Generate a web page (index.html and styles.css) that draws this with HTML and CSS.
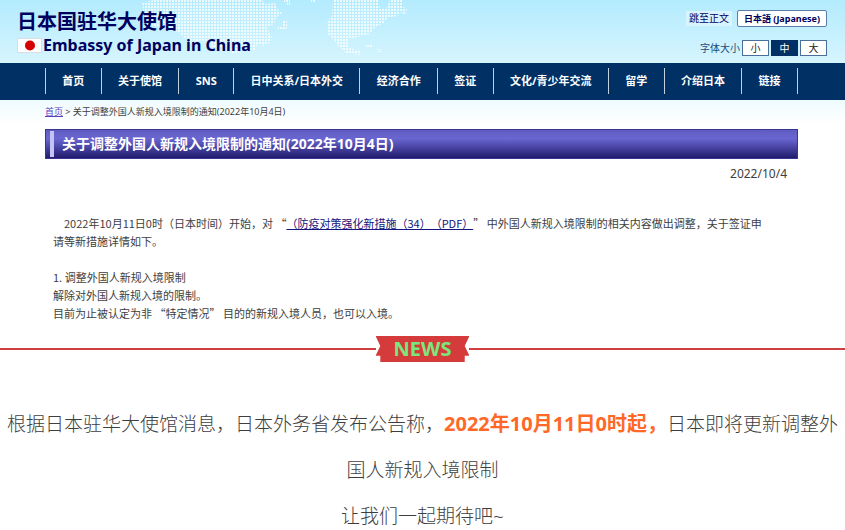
FILE: index.html
```
<!DOCTYPE html>
<html lang="zh-CN">
<head>
  <meta charset="UTF-8" />
  <meta name="viewport" content="width=device-width, initial-scale=1.0"/>
  <title>日本国驻华大使馆</title>
  <link rel="stylesheet" href="styles.css">
</head>
<body>
  <div class="embassy">
    <header class="site-header">
      <svg class="map" width="300" height="63" viewBox="0 0 300 63" aria-hidden="true">
        <defs>
          <pattern id="dots" width="3" height="3" patternUnits="userSpaceOnUse">
            <rect width="2" height="2" fill="#fff"/>
          </pattern>
        </defs>
        <g fill="url(#dots)">
          <path d="M12 3 L24 0 H132 L136 4 L145 3 L148 10 L152 13 L146 18 L144 24 L138 27 L139 33 L142 36 L141 42 L134 46 L128 44 L124 52 L114 48 L104 55 L96 46 L84 48 L72 40 L60 44 L50 34 L36 26 L24 27 L15 18 Z"/>
          <path d="M153 20 h4 v10 h-9 v-4 h5 z M154 0 h6 v6 h-3 v-3 h-3 z M181 0 h4 v3 h-4 z"/>
          <path d="M203 0 H248 L250 8 L256 9 L260 0 H272 V6 L277 9 L276 15 L270 12 L267 16 L258 18 L252 24 L244 28 L240 34 L228 37 L219 39 L219 47 L225 50 L231 50 L230 55 L216 53 L207 45 L204 40 L198 34 V28 L196 23 L202 16 Z"/>
          <path d="M235 45 h7 v3 h-7 z M247 49 h4 v3 h-4 z"/>
        </g>
      </svg>
      <div class="brand">
        <div class="brand-cn">日本国驻华大使馆</div>
        <div class="brand-en">
          <svg class="flag" width="25" height="15" viewBox="0 0 25 15" aria-hidden="true">
            <rect x="0.5" y="0.5" width="24" height="14" fill="#fff" stroke="#dcdce4"/>
            <circle cx="13" cy="7.5" r="5" fill="#d60000"/>
          </svg>
          <span>Embassy of Japan in China</span>
        </div>
      </div>
      <div class="tools">
        <div class="tools-row">
          <a class="skip" href="#main">跳至正文</a>
          <a class="lang" href="#">日本語 (Japanese)</a>
        </div>
        <div class="tools-row sizes">
          <span>字体大小</span>
          <button class="size">小</button>
          <button class="size active">中</button>
          <button class="size">大</button>
        </div>
      </div>
    </header>

    <nav class="menu">
      <a href="#">首页</a>
      <a href="#">关于使馆</a>
      <a href="#">SNS</a>
      <a href="#">日中关系/日本外交</a>
      <a href="#">经济合作</a>
      <a href="#">签证</a>
      <a href="#">文化/青少年交流</a>
      <a href="#">留学</a>
      <a href="#">介绍日本</a>
      <a href="#">链接</a>
    </nav>

    <main class="notice" id="main">
      <div class="crumbs"><a href="#">首页</a> &gt; 关于调整外国人新规入境限制的通知(2022年10月4日)</div>
      <h1>关于调整外国人新规入境限制的通知(2022年10月4日)</h1>
      <div class="date">2022/10/4</div>
      <div class="text">
        <p class="lead">2022年10月11日0时（日本时间）开始，对 “<a href="#">（防疫对策强化新措施（34）（PDF）</a>” 中外国人新规入境限制的相关内容做出调整，关于签证申<br>请等新措施详情如下。</p>
        <p>1. 调整外国人新规入境限制<br>解除对外国人新规入境的限制。<br>目前为止被认定为非 “特定情况” 目的的新规入境人员，也可以入境。</p>
      </div>
    </main>
  </div>

  <div class="divider">
    <h2 class="ribbon">NEWS</h2>
  </div>

  <div class="article">
    <p>根据日本驻华大使馆消息，日本外务省发布公告称，<strong>2022年10月11日0时起，</strong>日本即将更新调整外国人新规入境限制</p>
    <p>让我们一起期待吧~</p>
  </div>
</body>
</html>
```

FILE: styles.css
```
* {
  box-sizing: border-box;
}

body {
  margin: 0;
  background: #fff;
  color: #3e3e3e;
  font-family: "Noto Sans", "Noto Sans CJK SC", sans-serif;
  text-spacing-trim: space-all;
}

.site-header {
  position: relative;
  display: flex;
  justify-content: space-between;
  height: 63px;
  padding: 10px 18px 0 17px;
  background: linear-gradient(#b3ebfe, #d6f5fe);
}

.map {
  position: absolute;
  top: 0;
  left: 130px;
  opacity: 0.75;
}

.brand {
  position: relative;
  color: #00005f;
  font-weight: bold;
}

.brand-cn {
  font-size: 20px;
  line-height: 24px;
}

.brand-en {
  display: flex;
  align-items: center;
  gap: 1px;
  font-size: 16px;
  line-height: 22px;
}

.tools {
  display: flex;
  flex-direction: column;
  align-items: flex-end;
  gap: 12px;
  font-size: 10px;
}

.tools-row {
  display: flex;
  align-items: center;
  gap: 5px;
  height: 17px;
  color: #1c4a78;
}

.sizes {
  gap: 2px;
}

.tools a {
  color: #00005f;
  text-decoration: none;
  line-height: 15px;
}

.skip {
  padding: 0 3px;
  background: #d9f4fe;
}

.lang {
  padding: 0 6px;
  border: 1px solid #5a7fa8;
  border-radius: 2px;
  background: #fff;
  font-size: 9px;
  font-weight: bold;
}

.size {
  width: 27px;
  height: 16px;
  padding: 0;
  border: 1px solid #4a6f98;
  background: #fff;
  color: #222;
  font: inherit;
  line-height: 14px;
}

.size.active {
  border-color: #003064;
  background: #003064;
  color: #fff;
}

.menu {
  display: flex;
  padding: 5px 47px 6px 45px;
  background: #003064;
}

.menu a {
  flex: 1 1 auto;
  border-right: 1px solid #c3d0de;
  color: #fff;
  font-size: 11px;
  font-weight: bold;
  line-height: 26px;
  text-align: center;
  text-decoration: none;
}

.menu a:first-child {
  border-left: 1px solid #c3d0de;
}

.notice {
  padding: 4px 47px 0 45px;
  background: linear-gradient(#effbff, #fff 24px);
}

.crumbs {
  font-size: 9px;
  line-height: 16px;
}

.crumbs a {
  color: #5a3fc0;
}

.notice h1 {
  margin: 9px 0 0;
  padding: 1px 4px;
  border: 1px solid #3a3590;
  background: linear-gradient(#5f5cc0, #6a66d2 30%, #211c6c);
  color: #fff;
  font-size: 14px;
  line-height: 26px;
}

.notice h1::before {
  content: "";
  display: inline-block;
  width: 4px;
  height: 26px;
  margin-right: 8px;
  background: #c5c3f5;
  vertical-align: top;
}

.date {
  margin-top: 6px;
  padding-right: 11px;
  font-size: 12px;
  line-height: 18px;
  text-align: right;
}

.text {
  padding: 31px 0 0 8px;
  font-family: "Noto Sans CJK SC", sans-serif;
  font-size: 11px;
  line-height: 18px;
}

.text p {
  margin: 0 0 18px;
}

.text .lead {
  text-indent: 11px;
}

.text a {
  color: #14147c;
}

.divider {
  display: flex;
  align-items: flex-start;
  margin-top: -4px;
}

.divider::before,
.divider::after {
  content: "";
  flex: 1;
  height: 2px;
  margin-top: 12px;
  background: #cf3f3f;
}

.ribbon {
  margin: 0;
  padding: 0 18px;
  background: #d63b3b;
  clip-path: polygon(0 0, 100% 0, 95% 38%, 100% 76%, 95% 76%, 95% 100%, 5% 100%, 5% 76%, 0 76%, 5% 38%);
  color: #7be67b;
  font-size: 20px;
  line-height: 26px;
}

.article {
  padding: 39px 2px 0;
  font-size: 19px;
  font-weight: 300;
  line-height: 46px;
  text-align: center;
}

.article p {
  margin: 0;
}

.article strong {
  color: #ff6827;
  font-size: 20px;
  font-weight: bold;
}
```
